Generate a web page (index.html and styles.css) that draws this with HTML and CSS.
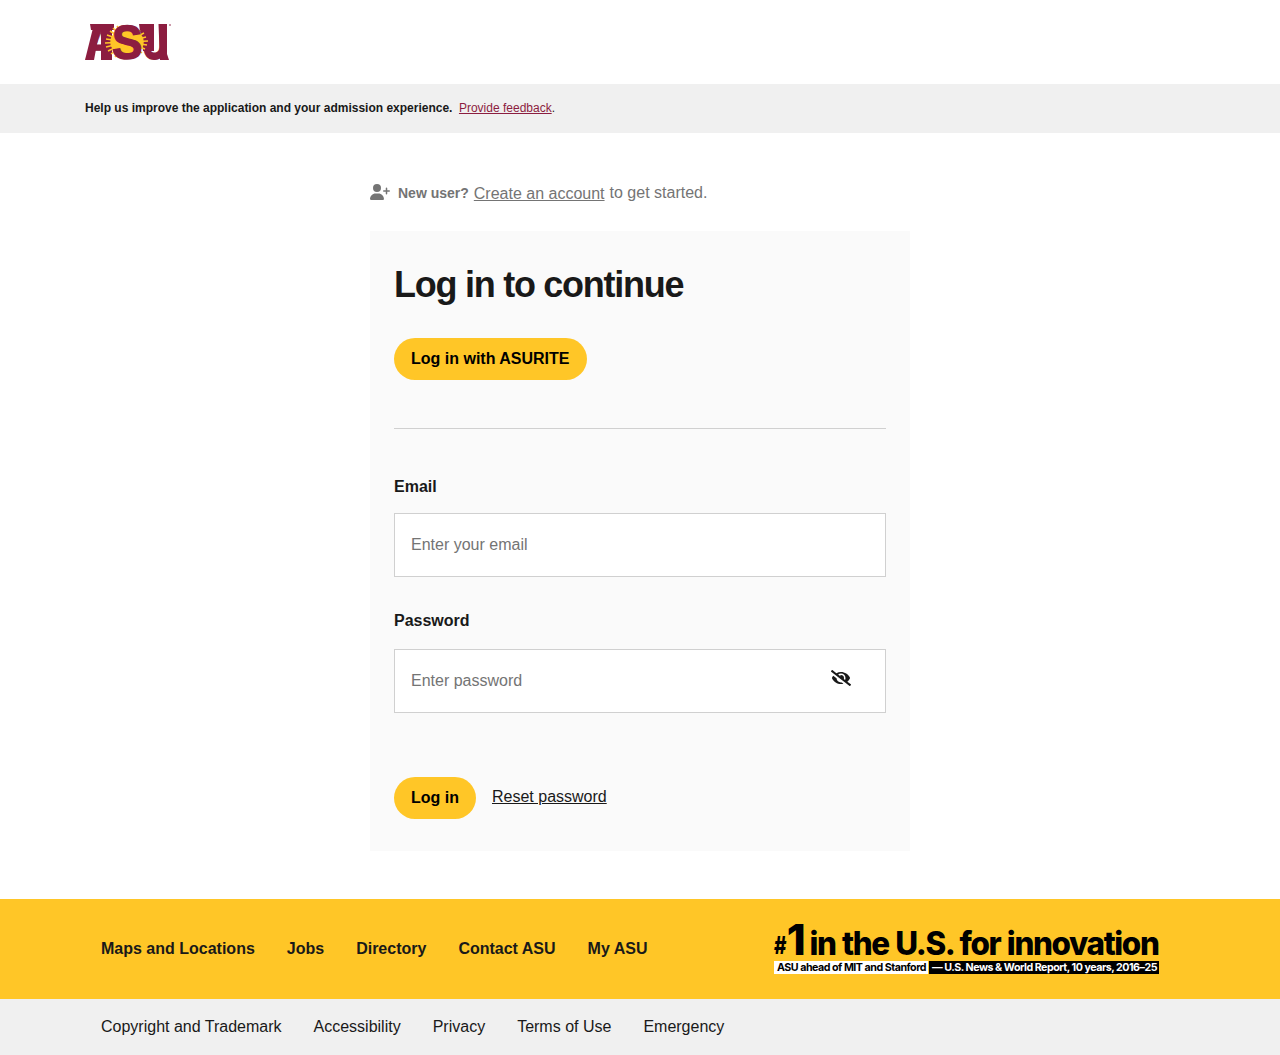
FILE: index.html
```html
<!DOCTYPE html>
<html lang="en">
<head>
<meta charset="utf-8">
<title>Log in | ASU</title>
<link rel="stylesheet" href="styles.css">
</head>
<body>
<header class="header">
  <div class="container">
    <svg class="logo" width="87" height="38" viewBox="0 0 87 38" role="img" aria-label="ASU">
      <text class="logo-text logo-a" transform="translate(2 36) scale(.67 1)">A</text>
      <text class="logo-text" transform="translate(57 36) scale(.72 1)">U</text>
      <path class="logo-slabs" d="M5 1h24v6H6zM8 5h7L9 37H0zM16 5h11v32H16zM54 1h15v27H58zM73.500 1H82v30l2 6h-9z"/>
      <g class="logo-rays">
        <path d="M42 19L32 3M42 19L28 5M42 19L25 8M42 19L22 12M42 19L21 16M42 19L20 20M42 19L21 24M42 19L23 28M42 19L26 31M42 19L30 34M42 19L50 5M42 19L55 7M42 19L59 10M42 19L61 14M42 19L63 18M42 19L62 22M42 19L60 26M42 19L57 30M42 19L53 33"/>
        <ellipse cx="42" cy="19" rx="16" ry="13"/>
      </g>
      <text class="logo-text logo-s" transform="translate(27 36) scale(.93 1)">S</text>
      <circle cx="85" cy="2" r=".8" class="logo-mark"/>
    </svg>
  </div>
</header>

<section class="feedback">
  <div class="container"><strong>Help us improve the application and your admission experience.</strong><a href="#">Provide feedback</a>.</div>
</section>

<main class="main">
  <p class="new-user">
    <svg class="user-icon" viewBox="0 0 640 512" aria-hidden="true"><path d="M96 128a128 128 0 1 1 256 0A128 128 0 1 1 96 128zM0 482.3C0 383.8 79.8 304 178.3 304h91.4C368.2 304 448 383.8 448 482.3c0 16.4-13.3 29.7-29.7 29.7H29.7C13.3 512 0 498.7 0 482.3zM504 312V248H440c-13.3 0-24-10.7-24-24s10.7-24 24-24h64V136c0-13.3 10.7-24 24-24s24 10.7 24 24v64h64c13.3 0 24 10.7 24 24s-10.7 24-24 24H552v64c0 13.3-10.7 24-24 24s-24-10.7-24-24z"/></svg>
    <strong>New user?</strong>
    <a href="#">Create an account</a>
    <span>to get started.</span>
  </p>
  <form class="card">
    <h1>Log in to continue</h1>
    <button class="btn" type="button">Log in with ASURITE</button>
    <hr>
    <label for="email">Email</label>
    <div class="field"><input id="email" type="email" placeholder="Enter your email"></div>
    <label for="password" class="password-label">Password</label>
    <div class="field">
      <input id="password" type="password" placeholder="Enter password">
      <svg class="eye-icon" viewBox="0 0 640 512" aria-hidden="true"><path d="M320 400c-75.85 0-137.25-58.71-142.9-133.11L72.2 185.82c-13.79 17.3-26.48 35.59-36.72 55.59a32.35 32.35 0 0 0 0 29.19C89.71 376.41 197.07 448 320 448c26.91 0 52.87-4 77.89-10.46L346 397.39a144.13 144.13 0 0 1-26 2.61zm313.82 58.1l-110.55-85.44a331.25 331.25 0 0 0 81.25-102.07 32.35 32.35 0 0 0 0-29.19C550.29 135.59 442.93 64 320 64a308.15 308.15 0 0 0-147.32 37.7L45.46 3.37A16 16 0 0 0 23 6.18L3.37 31.45A16 16 0 0 0 6.18 53.9l588.36 454.73a16 16 0 0 0 22.46-2.81l19.64-25.27a16 16 0 0 0-2.82-22.45zm-183.72-142l-39.3-30.38A94.75 94.75 0 0 0 416 256a94.76 94.76 0 0 0-121.31-92.21A47.65 47.65 0 0 1 304 192a46.64 46.64 0 0 1-1.54 10l-73.61-56.89A142.31 142.31 0 0 1 320 112a143.92 143.92 0 0 1 144 144c0 21.63-5.29 41.79-13.9 60.11z"/></svg>
    </div>
    <div class="actions">
      <button class="btn" type="button">Log in</button>
      <a href="#">Reset password</a>
    </div>
  </form>
</main>

<footer>
  <div class="footer-main">
    <div class="footer-row">
      <nav class="links links-bold">
        <a href="#">Maps and Locations</a><a href="#">Jobs</a><a href="#">Directory</a><a href="#">Contact ASU</a><a href="#">My ASU</a>
      </nav>
      <svg class="innovation" width="386" height="52" viewBox="0 0 386 52">
        <text class="rank" x="1" y="31" font-size="24" textLength="12.500" lengthAdjust="spacingAndGlyphs">#</text>
        <text class="rank" x="13.700" y="31.500" font-size="42" textLength="19" lengthAdjust="spacingAndGlyphs">1</text>
        <text class="rank tight" x="36.500" y="31.500" font-size="32" textLength="349" lengthAdjust="spacingAndGlyphs">in the U.S. for innovation</text>
        <rect x="1" y="38" width="154" height="13" fill="#fff"/>
        <rect x="156" y="38" width="230" height="13"/>
        <text class="rank-note" x="4" y="48" textLength="149" lengthAdjust="spacingAndGlyphs">ASU ahead of MIT and Stanford</text>
        <text class="rank-note light" x="159" y="48" textLength="225" lengthAdjust="spacingAndGlyphs">— U.S. News &amp; World Report, 10 years, 2016–25</text>
      </svg>
    </div>
  </div>
  <div class="footer-legal">
    <nav class="links">
      <a href="#">Copyright and Trademark</a><a href="#">Accessibility</a><a href="#">Privacy</a><a href="#">Terms of Use</a><a href="#">Emergency</a>
    </nav>
  </div>
</footer>
</body>
</html>
```
FILE: styles.css
```css
* { box-sizing: border-box; }
body {
  margin: 0;
  background: #fff;
  color: #191919;
  font: 16px/24px "Liberation Sans", Arial, sans-serif;
}
a { color: inherit; }
.container { width: 1110px; margin: 0 auto; }
.header { height: 84px; padding-top: 23px; }
.logo { display: block; overflow: visible; }
.logo-rays { fill: #ffc627; stroke: #ffc627; stroke-width: 1.5; }
.logo-slabs, .logo-mark { fill: #8c1d40; }
.logo-text {
  font: bold 49px "Liberation Sans", Arial, sans-serif;
  fill: #8c1d40;
  stroke: #8c1d40;
  stroke-width: 2;
}
.logo-a { font-style: italic; stroke-width: 1; }
.logo-s { stroke-width: 1.5; }

.feedback { height: 49px; padding-top: 12px; background: #f0f0f0; font-size: 12px; }
.feedback a { margin-left: 6.5px; color: #8c1d40; }

.main { width: 540px; margin: 0 auto; padding: 48px 0; }
.new-user { display: flex; align-items: center; height: 24px; margin: 0 0 26px; color: #747474; }
.user-icon { width: 20px; height: 16px; margin: -2px 8px 0 0; fill: #747474; }
.new-user strong { margin-right: 5px; font-size: 14px; }
.new-user a { margin-right: 5px; padding-top: 1px; }

.card { height: 620px; padding: 32px 24px; background: #fafafa; }
h1 { margin: 0 0 32px; font-size: 36px; line-height: 43px; letter-spacing: -1.26px; }
.btn {
  display: block;
  height: 42px;
  padding: 0 17px;
  border: 0;
  border-radius: 21px;
  background: #ffc627;
  color: #000;
  font: bold 16px/24px "Liberation Sans", Arial, sans-serif;
}
hr { height: 1px; margin: 48px 0 46px; border: 0; background: #d0d0d0; }
label { display: block; margin-bottom: 14px; font-weight: bold; }
.password-label { margin: 32px 0 16px; }
.field {
  display: flex;
  height: 64px;
  padding: 0 34px 0 16px;
  border: 1px solid #d0d0d0;
  background: #fff;
}
.field input {
  flex: 1;
  min-width: 0;
  padding: 0;
  border: 0;
  outline: 0;
  background: none;
  font: inherit;
}
.field input::placeholder { color: #747474; }
.eye-icon { width: 20px; height: 16px; margin-top: 20px; fill: #191919; }
.actions { display: flex; align-items: center; gap: 16px; margin-top: 64px; }
.actions a { margin-top: -2px; }

.footer-main { height: 100px; padding-top: 24px; background: #ffc627; }
.footer-row { display: flex; justify-content: space-between; width: 1058px; margin-left: 101px; }
.innovation { overflow: visible; }
.links { display: flex; gap: 32px; }
.links a { text-decoration: none; }
.links-bold { padding-top: 14px; font-weight: bold; }
.rank { font-family: Inter, "Liberation Sans", sans-serif; font-weight: 800; }
.tight { letter-spacing: -1.4px; word-spacing: 1px; }
.rank-note {
  font: 700 11px Inter, "Liberation Sans", sans-serif;
  letter-spacing: -.5px;
}
.light { fill: #fff; }
.footer-legal { height: 56px; padding: 16px 0 0 101px; background: #f0f0f0; }
```
